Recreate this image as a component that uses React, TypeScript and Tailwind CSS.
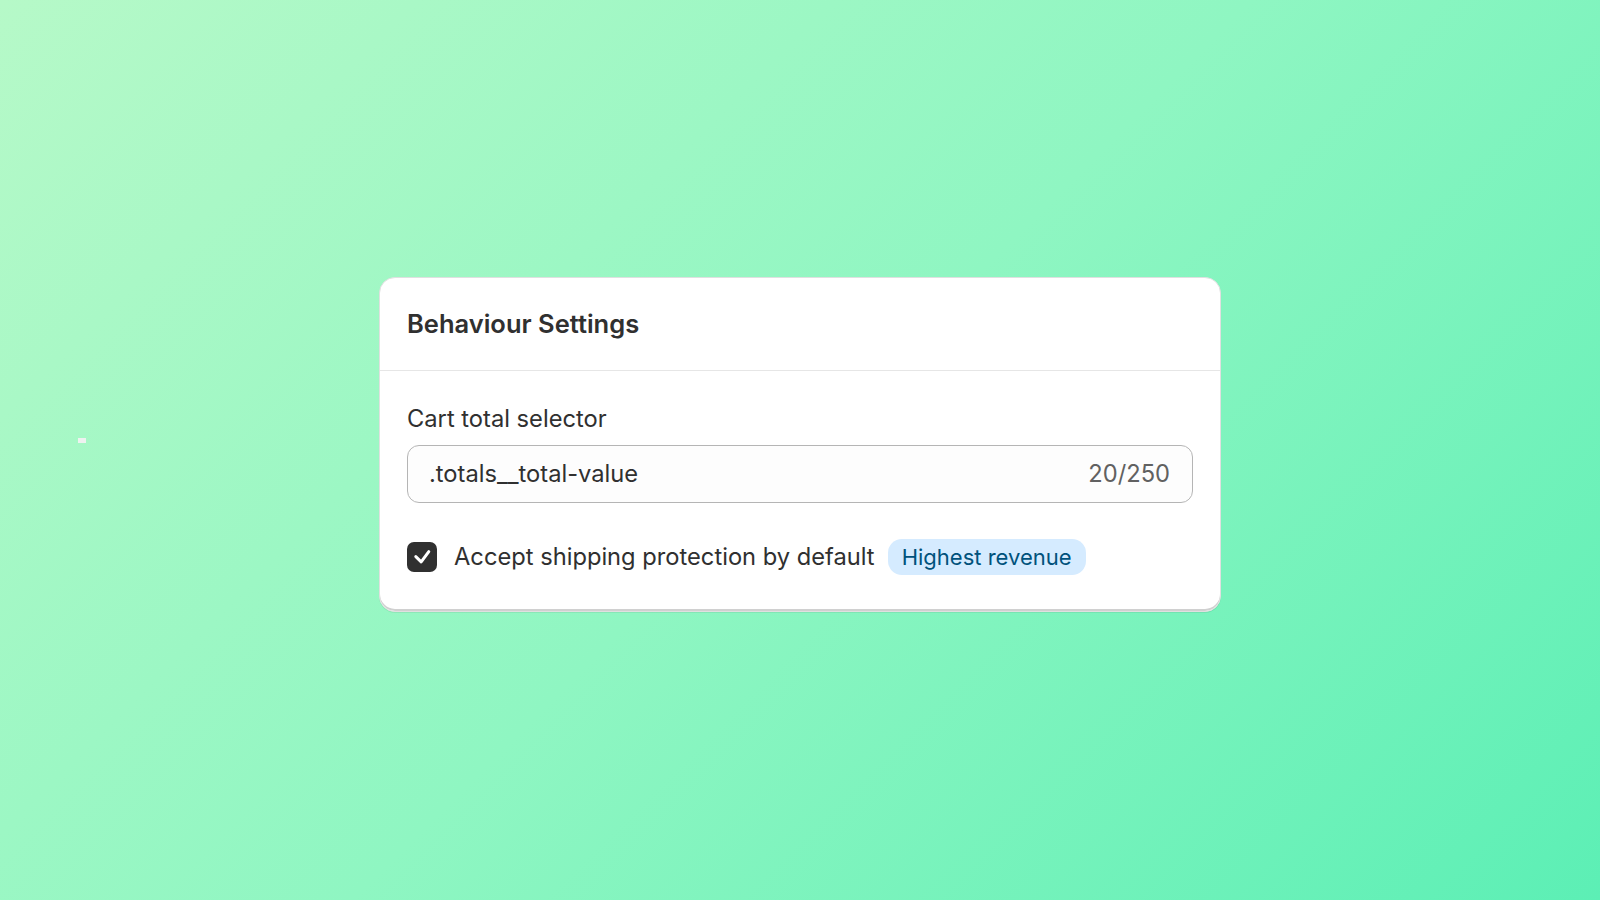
export default function App() {
  return (
    <div
      className="relative min-h-screen w-full flex items-center justify-center pb-[11px] bg-[linear-gradient(135deg,#b6f9c8_0%,#8ff6c2_50%,#5cefb5_100%)]"
      style={{ fontFamily: "Inter, 'Noto Sans', sans-serif" }}
    >
      <div className="absolute left-[78px] top-[438px] w-[8px] h-[5px] bg-[#eef2f0]" />

      <div className="w-[842px] bg-white rounded-[16px] border border-[#e0e0e0] shadow-[inset_0_-2px_0_0_#d0d0d0,0_1px_0_0_rgba(0,0,0,0.06)] overflow-hidden">
        <div className="h-[93px] flex items-center px-[27px] border-b border-[#e6e6e6]">
          <h2 className="text-[25.5px] leading-[32px] font-semibold text-[#303030]">Behaviour Settings</h2>
        </div>

        <div className="px-[27px] pt-[34px] pb-[36px]">
          <label className="block text-[23.7px] leading-[28px] text-[#303030]">Cart total selector</label>

          <div className="mt-[12px] h-[58px] flex items-center justify-between rounded-[12px] border border-[#b5b5b5] bg-[#fdfdfd] pl-[21px] pr-[22px]">
            <span className="text-[23.7px] text-[#303030]">.totals__total-value</span>
            <span className="text-[23.7px] text-[#616161]">20/250</span>
          </div>

          <div className="mt-[36px] h-[36px] flex items-center">
            <div className="w-[30px] h-[30px] rounded-[7px] bg-[#303030] flex items-center justify-center">
              <svg width="30" height="30" viewBox="0 0 30 30" fill="none">
                <path d="M8.8 14.6l5.4 5.2L21.8 9.6" stroke="white" strokeWidth="3" strokeLinecap="round" strokeLinejoin="round" />
              </svg>
            </div>
            <span className="ml-[17px] text-[23.7px] text-[#303030]">Accept shipping protection by default</span>
            <span className="ml-[13px] h-[36px] flex items-center rounded-[14px] bg-[#d5ebff] px-[14px] text-[22px] text-[#00527c]">
              Highest revenue
            </span>
          </div>
        </div>
      </div>
    </div>
  );
}
